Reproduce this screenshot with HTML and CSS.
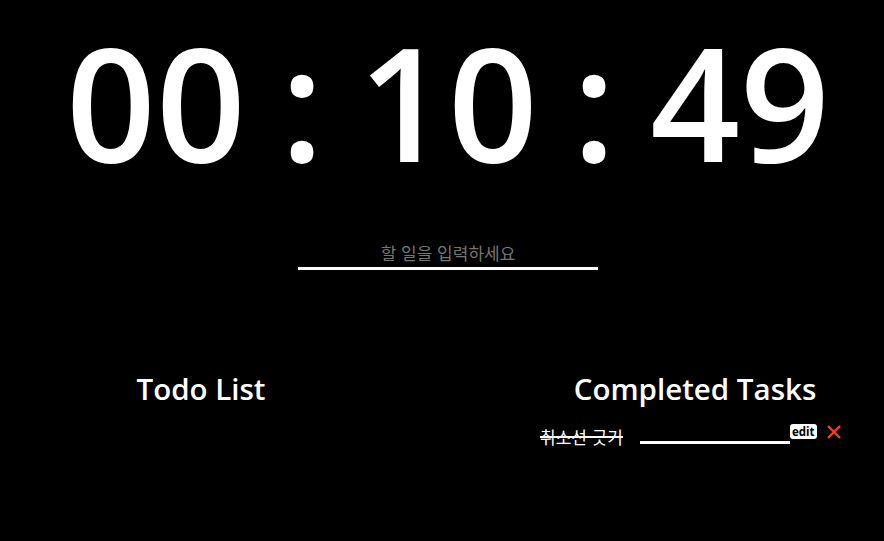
FILE: index.html
```html
<!DOCTYPE html>
<html lang="ko">
<head>
<meta charset="utf-8">
<link rel="stylesheet" href="styles.css">
</head>
<body>
<div class="app">
  <div class="timer">00 : 10 : 49</div>
  <div class="entry">
    <input class="entry-input" type="text" placeholder="할 일을 입력하세요">
  </div>
  <div class="lists">
    <section class="col col-todo">
      <h2 class="col-title">Todo List</h2>
    </section>
    <section class="col col-done">
      <h2 class="col-title">Completed Tasks</h2>
      <div class="item">
        <span class="item-text">취소선 긋기</span>
        <span class="item-line"></span>
        <span class="item-edit">edit</span>
        <svg class="item-del" width="16" height="16" viewBox="0 0 16 16" aria-label="delete">
          <path d="M2 2 L14 14 M14 2 L2 14" stroke="#ff3b1a" stroke-width="2.4" stroke-linecap="butt" fill="none"/>
        </svg>
      </div>
    </section>
  </div>
</div>
</body>
</html>
```
FILE: styles.css
```css
html, body {
  margin: 0;
  padding: 0;
  background: #000;
  color: #fff;
  font-family: "Open Sans", "Noto Sans", "Noto Sans CJK KR", sans-serif;
}
.app {
  width: 884px;
  height: 541px;
  padding-left: 12px;
  box-sizing: border-box;
  display: flex;
  flex-direction: column;
}
.timer {
  text-align: center;
  font-size: 157px;
  font-weight: 600;
  line-height: 1.36;
  margin-top: -5px;
  padding: 0 10px;
  word-spacing: -6px;
  white-space: nowrap;
}
.entry {
  display: flex;
  justify-content: center;
  margin-top: 31px;
}
.entry-input {
  width: 300px;
  background: transparent;
  border: none;
  border-bottom: 3px solid #fff;
  color: #fff;
  text-align: center;
  font-family: "Noto Sans CJK KR", sans-serif;
  font-size: 17px;
  padding: 0 0 2px;
  outline: none;
}
.entry-input::placeholder {
  color: #757575;
}
.lists {
  display: flex;
  margin-top: 100px;
}
.col-title {
  margin: 0;
  font-size: 29.5px;
  font-weight: 600;
  text-align: center;
  line-height: 1.3;
}
.col-todo {
  width: 378px;
}
.col-done {
  margin-left: 150px;
  width: 310px;
}
.item {
  display: flex;
  align-items: flex-start;
  margin-top: 19px;
  height: 22px;
}
.item-text {
  font-family: "Noto Sans CJK KR", sans-serif;
  font-size: 17px;
  text-decoration: line-through;
  text-decoration-thickness: 1.5px;
  text-decoration-color: #fff;
  width: 100px;
  line-height: 20px;
  margin-top: 0;
}
.item-line {
  width: 150px;
  height: 3px;
  background: #fff;
  margin-top: 14px;
}
.item-edit {
  background: #fff;
  color: #000;
  font-size: 11.5px;
  font-weight: 700;
  border-radius: 3px;
  padding: 0 2px;
  line-height: 15px;
  margin-top: -3px;
}
.item-del {
  margin-left: 9px;
  margin-top: -3px;
}
```
